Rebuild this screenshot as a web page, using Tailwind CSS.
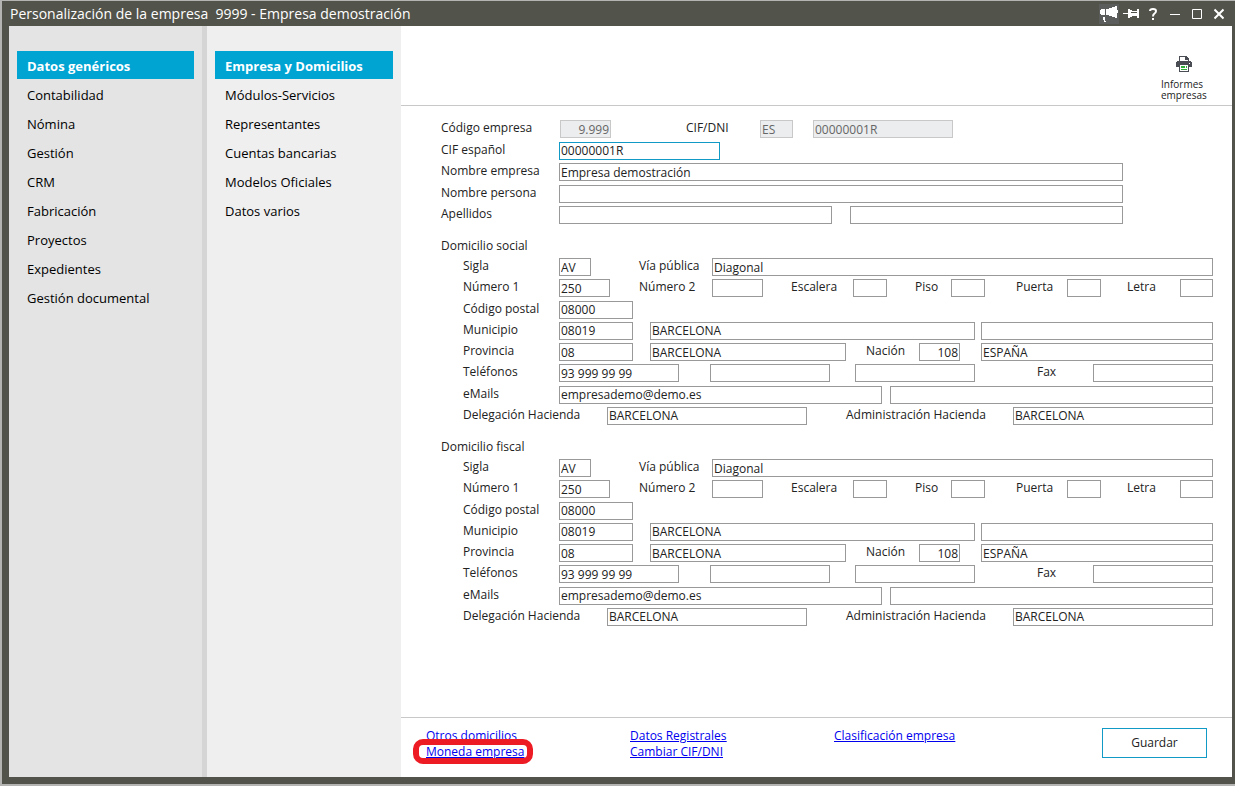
<!DOCTYPE html>
<html lang="es">
<head>
    <meta charset="UTF-8">
    <meta name="viewport" content="width=device-width, initial-scale=1.0">
    <title>Personalización de la empresa</title>
    <script src="https://cdn.jsdelivr.net/npm/@tailwindcss/browser@4"></script>
    <style>
        body {
            font-family: 'Open Sans', 'Noto Sans', sans-serif;
        }
        .field {
            height: 18px;
            min-width: 0;
            padding: 0 1px;
            border: 1px solid #999;
            background: #fff;
            line-height: 16px;
        }
        .field:focus {
            outline: none;
            border-color: #109ac5;
        }
        .field:disabled {
            border-color: #c8c8c8;
            background: #ebedee;
            color: #666;
        }
    </style>
</head>
<body class="min-h-screen flex flex-col bg-[#b4b5b2] pt-px pl-0.5 pb-0.5 text-xs text-[#222]">
    <div class="grow flex flex-col bg-[#52534a] pl-[7px] pr-[3px] pb-[7px]">

        <!-- Title bar -->
        <header class="h-[25px] flex items-center justify-between pl-px pr-2 text-white">
            <h1 class="text-sm leading-5 whitespace-pre">Personalización de la empresa  9999 - Empresa demostración</h1>
            <div class="flex items-center">
                <button type="button" aria-label="Avisos" class="bg-[#5b5c5c]">
                    <svg class="w-5 h-5" viewBox="0 0 20 20" fill="#fff" shape-rendering="crispEdges">
                        <path d="M1 6h1V5h4v6H2v-1H1zM7 5h3V4h3V3h3V2h2v12h-2v-1h-3v-1h-3v-1H7zM18 6h1v3h-1zM4 13h2v4h1v1H5v-2H4z"/>
                    </svg>
                </button>
                <button type="button" aria-label="Fijar" class="ml-1">
                    <svg class="w-[17px] h-5" viewBox="0 0 17 20" fill="#fff" shape-rendering="crispEdges">
                        <path d="M0 9h5V5h2v1h2v1h5V5h2v9h-2v-2H9v1H7v1H5v-4H0z"/>
                        <path d="M8 8h6v1H8z" fill="#52534a"/>
                    </svg>
                </button>
                <button type="button" aria-label="Ayuda" class="ml-2">
                    <svg class="w-2.5 h-5" viewBox="0 0 10 20" fill="none" stroke="#fff" stroke-width="2">
                        <path d="M2 7Q2 5 5 5T8 7Q8 8.500 6.500 9.500T5 12.500M5 14v2"/>
                    </svg>
                </button>
                <button type="button" aria-label="Minimizar" class="ml-3">
                    <svg class="w-2.5 h-5" viewBox="0 0 10 20" fill="#fff"><path d="M0 10h10v1H0z"/></svg>
                </button>
                <button type="button" aria-label="Maximizar" class="ml-3">
                    <svg class="w-2.5 h-5" viewBox="0 0 10 20" fill="none" stroke="#fff"><path d="M.5 5.500h9v9h-9z"/></svg>
                </button>
                <button type="button" aria-label="Cerrar" class="ml-3">
                    <svg class="w-2.5 h-5" viewBox="0 0 10 20" fill="none" stroke="#fff" stroke-width="2"><path d="M.5 5.500l9 9M9.500 5.500l-9 9"/></svg>
                </button>
            </div>
        </header>

        <div class="grow flex">
            <!-- First level menu -->
            <nav class="w-[198px] shrink-0 flex flex-col gap-px pt-[25px] px-2 bg-[#e4e4e4] border-r-[5px] border-[#d5d5d5] text-[13px] text-black">
                <a href="#" class="h-7 px-2.5 pt-px leading-7 bg-[#00a4d3] text-white font-bold">Datos genéricos</a>
                <a href="#" class="h-7 px-2.5 pt-px leading-7">Contabilidad</a>
                <a href="#" class="h-7 px-2.5 pt-px leading-7">Nómina</a>
                <a href="#" class="h-7 px-2.5 pt-px leading-7">Gestión</a>
                <a href="#" class="h-7 px-2.5 pt-px leading-7">CRM</a>
                <a href="#" class="h-7 px-2.5 pt-px leading-7">Fabricación</a>
                <a href="#" class="h-7 px-2.5 pt-px leading-7">Proyectos</a>
                <a href="#" class="h-7 px-2.5 pt-px leading-7">Expedientes</a>
                <a href="#" class="h-7 px-2.5 pt-px leading-7">Gestión documental</a>
            </nav>

            <!-- Second level menu -->
            <nav class="w-[194px] shrink-0 flex flex-col gap-px pt-[25px] px-2 bg-[#efefef] text-[13px] text-black">
                <a href="#" class="h-7 px-2.5 pt-px leading-7 bg-[#00a4d3] text-white font-bold">Empresa y Domicilios</a>
                <a href="#" class="h-7 px-2.5 pt-px leading-7">Módulos-Servicios</a>
                <a href="#" class="h-7 px-2.5 pt-px leading-7">Representantes</a>
                <a href="#" class="h-7 px-2.5 pt-px leading-7">Cuentas bancarias</a>
                <a href="#" class="h-7 px-2.5 pt-px leading-7">Modelos Oficiales</a>
                <a href="#" class="h-7 px-2.5 pt-px leading-7">Datos varios</a>
            </nav>

            <main class="grow flex flex-col bg-white">
                <!-- Toolbar -->
                <div class="h-20 flex justify-end items-end pr-5 pb-1 border-b border-[#c8c8c8]">
                    <button type="button" class="w-[51px] flex flex-col items-start text-[10px] leading-[11px] text-left">
                        <svg class="w-4 h-4 ml-[15px] mb-[7px]" viewBox="0 0 16 16" shape-rendering="crispEdges">
                            <path d="M3 0h7l3 3v2h2v1h1v5h-3v5H3v-5H0V6h1V5h2z" fill="#4b4d55"/>
                            <path d="M4 1h5v3h3v1H4zM4 9h8v6H4z" fill="#fff"/>
                            <path d="M5 10h4v2H5zM10 10h1v2h-1zM5 13h6v1H5z" fill="#2fae3a"/>
                            <path d="M13 7h1v1h-1z" fill="#fff"/>
                        </svg>
                        <span>Informes</span>
                        <span>empresas</span>
                    </button>
                </div>

                <form class="grow flex flex-col">
                    <div class="grow pt-3.5 pl-10 pr-[19px]">
                        <!-- Company -->
                        <div class="h-[104px] flex flex-col justify-between pr-[90px]">
                            <div class="flex">
                                <label for="codigo" class="w-[119px] leading-4">Código empresa</label>
                                <input id="codigo" class="field w-[51px] text-right" value="9.999" disabled>
                                <label for="cif" class="w-[74px] ml-[75px] leading-4">CIF/DNI</label>
                                <input id="cifPais" aria-label="País" class="field w-[33px]" value="ES" disabled>
                                <input id="cif" class="field w-[140px] ml-5" value="00000001R" disabled>
                            </div>
                            <div class="flex">
                                <label for="cifEs" class="w-[118px] leading-4">CIF español</label>
                                <input id="cifEs" class="field w-[161px] border-[#109ac5]!" value="00000001R">
                            </div>
                            <div class="flex">
                                <label for="nombre" class="w-[118px] leading-4">Nombre empresa</label>
                                <input id="nombre" class="field flex-1" value="Empresa demostración">
                            </div>
                            <div class="flex">
                                <label for="persona" class="w-[118px] leading-4">Nombre persona</label>
                                <input id="persona" class="field flex-1">
                            </div>
                            <div class="flex">
                                <label for="apellido1" class="w-[118px] leading-4">Apellidos</label>
                                <input id="apellido1" class="field flex-1">
                                <input aria-label="Segundo apellido" class="field flex-1 ml-[18px]">
                            </div>
                        </div>

                        <!-- Registered address -->
                        <h2 class="mt-3.5 mb-1 leading-4">Domicilio social</h2>
                        <div class="h-[167px] flex flex-col justify-between pl-[22px]">
                            <div class="flex">
                                <label for="sSigla" class="w-24 leading-4">Sigla</label>
                                <input id="sSigla" class="field w-8" value="AV">
                                <label for="sVia" class="w-[73px] ml-12 leading-4">Vía pública</label>
                                <input id="sVia" class="field flex-1" value="Diagonal">
                            </div>
                            <div class="flex">
                                <label for="sNum1" class="w-24 leading-4">Número 1</label>
                                <input id="sNum1" class="field w-[51px]" value="250">
                                <label for="sNum2" class="w-[73px] ml-[29px] leading-4">Número 2</label>
                                <input id="sNum2" class="field w-[51px]">
                                <label for="sEscalera" class="w-[62px] ml-7 leading-4">Escalera</label>
                                <input id="sEscalera" class="field w-[34px]">
                                <label for="sPiso" class="w-9 ml-7 leading-4">Piso</label>
                                <input id="sPiso" class="field w-[34px]">
                                <label for="sPuerta" class="w-[51px] ml-[31px] leading-4">Puerta</label>
                                <input id="sPuerta" class="field w-[34px]">
                                <label for="sLetra" class="w-[53px] ml-auto leading-4">Letra</label>
                                <input id="sLetra" class="field w-[33px]">
                            </div>
                            <div class="flex">
                                <label for="sPostal" class="w-24 leading-4">Código postal</label>
                                <input id="sPostal" class="field w-[74px]" value="08000">
                            </div>
                            <div class="flex">
                                <label for="sMunicipio" class="w-24 leading-4">Municipio</label>
                                <input id="sMunicipio" class="field w-[74px]" value="08019">
                                <input aria-label="Nombre municipio" class="field flex-1 ml-[17px]" value="BARCELONA">
                                <input aria-label="Municipio adicional" class="field w-[232px] ml-1.5">
                            </div>
                            <div class="flex">
                                <label for="sProvincia" class="w-24 leading-4">Provincia</label>
                                <input id="sProvincia" class="field w-[74px]" value="08">
                                <input aria-label="Nombre provincia" class="field flex-1 ml-[17px]" value="BARCELONA">
                                <label for="sNacion" class="w-[53px] ml-5 leading-4">Nación</label>
                                <input id="sNacion" class="field w-[41px] text-right" value="108">
                                <input aria-label="Nombre nación" class="field w-[232px] ml-[21px]" value="ESPAÑA">
                            </div>
                            <div class="flex">
                                <label for="sTelefono" class="w-24 leading-4">Teléfonos</label>
                                <input id="sTelefono" class="field w-[120px]" value="93 999 99 99">
                                <input aria-label="Teléfono 2" class="field w-[120px] ml-[31px]">
                                <input aria-label="Teléfono 3" class="field w-[120px] ml-[25px]">
                                <label for="sFax" class="w-14 ml-auto leading-4">Fax</label>
                                <input id="sFax" class="field w-[120px]">
                            </div>
                            <div class="flex">
                                <label for="sMail" class="w-24 leading-4">eMails</label>
                                <input id="sMail" class="field flex-1" value="empresademo@demo.es">
                                <input aria-label="eMail 2" class="field flex-1 ml-2">
                            </div>
                            <div class="flex">
                                <label for="sDelegacion" class="w-36 leading-4">Delegación Hacienda</label>
                                <input id="sDelegacion" class="field flex-1" value="BARCELONA">
                                <label for="sAdministracion" class="w-[167px] ml-[39px] leading-4">Administración Hacienda</label>
                                <input id="sAdministracion" class="field flex-1" value="BARCELONA">
                            </div>
                        </div>

                        <!-- Tax address -->
                        <h2 class="mt-3.5 mb-1 leading-4">Domicilio fiscal</h2>
                        <div class="h-[167px] flex flex-col justify-between pl-[22px]">
                            <div class="flex">
                                <label for="fSigla" class="w-24 leading-4">Sigla</label>
                                <input id="fSigla" class="field w-8" value="AV">
                                <label for="fVia" class="w-[73px] ml-12 leading-4">Vía pública</label>
                                <input id="fVia" class="field flex-1" value="Diagonal">
                            </div>
                            <div class="flex">
                                <label for="fNum1" class="w-24 leading-4">Número 1</label>
                                <input id="fNum1" class="field w-[51px]" value="250">
                                <label for="fNum2" class="w-[73px] ml-[29px] leading-4">Número 2</label>
                                <input id="fNum2" class="field w-[51px]">
                                <label for="fEscalera" class="w-[62px] ml-7 leading-4">Escalera</label>
                                <input id="fEscalera" class="field w-[34px]">
                                <label for="fPiso" class="w-9 ml-7 leading-4">Piso</label>
                                <input id="fPiso" class="field w-[34px]">
                                <label for="fPuerta" class="w-[51px] ml-[31px] leading-4">Puerta</label>
                                <input id="fPuerta" class="field w-[34px]">
                                <label for="fLetra" class="w-[53px] ml-auto leading-4">Letra</label>
                                <input id="fLetra" class="field w-[33px]">
                            </div>
                            <div class="flex">
                                <label for="fPostal" class="w-24 leading-4">Código postal</label>
                                <input id="fPostal" class="field w-[74px]" value="08000">
                            </div>
                            <div class="flex">
                                <label for="fMunicipio" class="w-24 leading-4">Municipio</label>
                                <input id="fMunicipio" class="field w-[74px]" value="08019">
                                <input aria-label="Nombre municipio" class="field flex-1 ml-[17px]" value="BARCELONA">
                                <input aria-label="Municipio adicional" class="field w-[232px] ml-1.5">
                            </div>
                            <div class="flex">
                                <label for="fProvincia" class="w-24 leading-4">Provincia</label>
                                <input id="fProvincia" class="field w-[74px]" value="08">
                                <input aria-label="Nombre provincia" class="field flex-1 ml-[17px]" value="BARCELONA">
                                <label for="fNacion" class="w-[53px] ml-5 leading-4">Nación</label>
                                <input id="fNacion" class="field w-[41px] text-right" value="108">
                                <input aria-label="Nombre nación" class="field w-[232px] ml-[21px]" value="ESPAÑA">
                            </div>
                            <div class="flex">
                                <label for="fTelefono" class="w-24 leading-4">Teléfonos</label>
                                <input id="fTelefono" class="field w-[120px]" value="93 999 99 99">
                                <input aria-label="Teléfono 2" class="field w-[120px] ml-[31px]">
                                <input aria-label="Teléfono 3" class="field w-[120px] ml-[25px]">
                                <label for="fFax" class="w-14 ml-auto leading-4">Fax</label>
                                <input id="fFax" class="field w-[120px]">
                            </div>
                            <div class="flex">
                                <label for="fMail" class="w-24 leading-4">eMails</label>
                                <input id="fMail" class="field flex-1" value="empresademo@demo.es">
                                <input aria-label="eMail 2" class="field flex-1 ml-2">
                            </div>
                            <div class="flex">
                                <label for="fDelegacion" class="w-36 leading-4">Delegación Hacienda</label>
                                <input id="fDelegacion" class="field flex-1" value="BARCELONA">
                                <label for="fAdministracion" class="w-[167px] ml-[39px] leading-4">Administración Hacienda</label>
                                <input id="fAdministracion" class="field flex-1" value="BARCELONA">
                            </div>
                        </div>
                    </div>

                    <!-- Footer -->
                    <footer class="h-[60px] flex items-start pt-2.5 pl-[25px] pr-[25px] border-t border-[#c8c8c8]">
                        <div class="grid grid-cols-[204px_204px_auto] leading-4 text-[#0000ee] underline">
                            <a href="#">Otros domicilios</a>
                            <a href="#">Datos Registrales</a>
                            <a href="#">Clasificación empresa</a>
                            <div class="relative">
                                <a href="#">Moneda empresa</a>
                                <span class="absolute -left-[13px] -top-[5px] w-[120px] h-[25px] border-6 border-[#ed1c24] rounded-[10px] pointer-events-none"></span>
                            </div>
                            <a href="#">Cambiar CIF/DNI</a>
                        </div>
                        <button type="submit" class="w-[105px] h-[30px] ml-auto bg-white border border-[#109ac5]">Guardar</button>
                    </footer>
                </form>
            </main>
        </div>
    </div>
</body>
</html>
